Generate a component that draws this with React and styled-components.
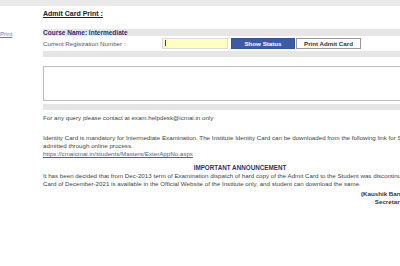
import React from "react";
import styled, { createGlobalStyle } from "styled-components";

const Global = createGlobalStyle`
  html, body {
    margin: 0;
    padding: 0;
    background: #fff;
    overflow: hidden;
  }
  body {
    font-family: "Liberation Sans", Arial, sans-serif;
    font-size: 6.2px;
    color: #444;
  }
`;

const TopBand = styled.div`
  height: 6px;
  background: #e9e9e9;
  width: 100%;
`;

const Page = styled.div`
  display: flex;
  width: 460px;
`;

const Side = styled.div`
  width: 43px;
  flex-shrink: 0;
  padding-top: 24px;
  a {
    color: #5a7fc0;
    text-decoration: underline;
    font-size: 6px;
  }
`;

const Main = styled.div`
  width: 394px;
  flex-shrink: 0;
  display: flex;
  flex-direction: column;
`;

const Title = styled.div`
  font-weight: bold;
  color: #222;
  text-decoration: underline;
  font-size: 7px;
  margin-top: 4px;
  height: 19px;
`;

const Band = styled.div`
  background: #e6e6e6;
  width: 420px;
  height: ${(p) => p.h || 6}px;
  display: flex;
  align-items: center;
`;

const CourseName = styled.span`
  font-weight: bold;
  color: #2f2f78;
  font-size: 6.5px;
`;

const FormRow = styled.div`
  display: flex;
  align-items: center;
  height: 14px;
  margin-bottom: 1px;
`;

const Label = styled.span`
  width: 119px;
  color: #555;
`;

const Input = styled.div`
  width: 62px;
  height: 9px;
  background: #ffffc0;
  border: 1px solid #ddd;
  margin-right: 3px;
  display: flex;
  align-items: center;
  padding-left: 2px;
  &::before {
    content: "";
    width: 1px;
    height: 6px;
    background: #444;
  }
`;

const Button = styled.div`
  height: 9px;
  width: ${(p) => p.w}px;
  display: flex;
  align-items: center;
  justify-content: center;
  font-weight: bold;
  font-size: 6.2px;
  margin-right: 1px;
  border: 1px solid ${(p) => (p.primary ? "#34549e" : "#999")};
  background: ${(p) => (p.primary ? "#3d5aa6" : "#fff")};
  color: ${(p) => (p.primary ? "#fff" : "#333")};
`;

const Box = styled.div`
  margin-top: 9px;
  width: 420px;
  height: 33px;
  border: 1px solid #bbb;
  margin-bottom: 3px;
`;

const Para = styled.p`
  margin: ${(p) => p.mt || 0}px 0 0 0;
  line-height: 8px;
  white-space: nowrap;
  color: #444;
`;

const Link = styled.a`
  color: #4a62a8;
  text-decoration: underline;
`;

const Heading = styled.div`
  margin-top: 5px;
  text-align: center;
  font-weight: bold;
  color: #2f2f78;
  font-size: 6.3px;
  line-height: 9px;
`;

const Signature = styled.div`
  margin-top: 2px;
  margin-right: 20px;
  align-self: flex-end;
  text-align: center;
  font-weight: bold;
  color: #333;
  line-height: 8px;
`;

export default function App() {
  return (
    <>
      <Global />
      <TopBand />
      <Page>
        <Side>
          <a href="#">Print</a>
        </Side>
        <Main>
          <Title>Admit Card Print :</Title>
          <Band h={7}>
            <CourseName>Course Name: Intermediate</CourseName>
          </Band>
          <FormRow>
            <Label>Current Registration Number :</Label>
            <Input />
            <Button primary w={62}>Show Status</Button>
            <Button w={63}>Print Admit Card</Button>
          </FormRow>
          <Band h={6} />
          <Box />
          <Band h={6} />
          <Para mt={4}>For any query please contact at exam.helpdesk@icmai.in only</Para>
          <Para mt={12}>
            Identity Card is mandatory for Intermediate Examination. The Institute Identity Card can be downloaded from the following link for Students
          </Para>
          <Para>admitted through online process.</Para>
          <Para>
            <Link href="#">https://cmaicmai.in/students/Masters/ExterAppNo.aspx</Link>
          </Para>
          <Heading>IMPORTANT ANNOUNCEMENT</Heading>
          <Para>
            It has been decided that from Dec-2013 term of Examination dispatch of hard copy of the Admit Card to the Student was discontinued and the Admit
          </Para>
          <Para>
            Card of December-2021 is available in the Official Website of the Institute only, and student can download the same.
          </Para>
          <Signature>
            (Kaushik Banerjee)
            <br />
            Secretary
          </Signature>
        </Main>
      </Page>
    </>
  );
}
